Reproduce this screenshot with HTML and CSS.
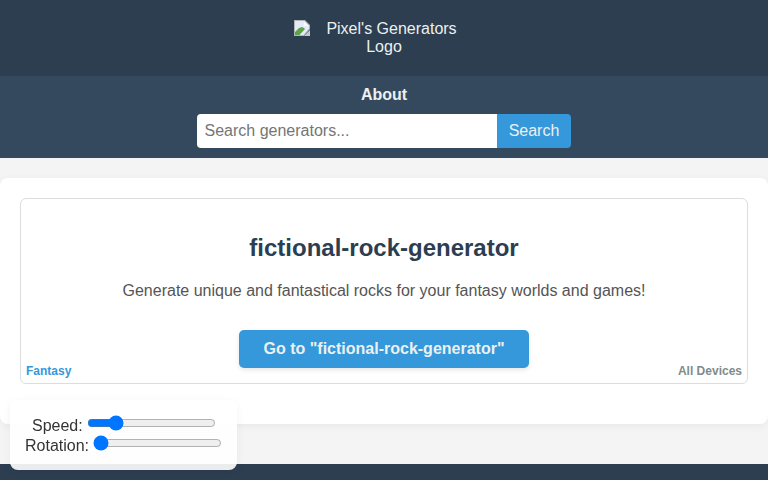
FILE: index.html
```html
<!DOCTYPE html>
<html lang="en">
<head>
<meta charset="utf-8">
<title>fictional-rock-generator</title>
<link rel="stylesheet" href="styles.css">
</head>
<body>
<header class="site-header">
  <div class="logo">
    <svg class="broken-icon" width="16" height="16" viewBox="0 0 16 16" aria-hidden="true">
      <path d="M0 0h11l5 5v4l-6 7H0z" fill="#aeb6ba"/>
      <path d="M1 1h9l5 5v2.500L9.500 15H1z" fill="#e3ecf8"/>
      <path d="M10 1l5 5h-5z" fill="#f7f9fb"/>
      <path d="M1 15v-3l4-4 3-1 2 1 1 1-5.500 6z" fill="#5da447"/>
      <path d="M11 15l5-5v6h-6z" fill="#c4ccd0"/>
    </svg><span class="logo-first">Pixel's Generators</span><br>Logo
  </div>
</header>
<nav class="site-nav">
  <a class="nav-link" href="#">About</a>
  <form class="search">
    <input class="search-input" type="text" placeholder="Search generators...">
    <button class="search-button" type="button">Search</button>
  </form>
</nav>
<main class="content">
  <section class="card">
    <h1 class="card-title">fictional-rock-generator</h1>
    <p class="card-text">Generate unique and fantastical rocks for your fantasy worlds and games!</p>
    <a class="card-button" href="#">Go to "fictional-rock-generator"</a>
    <div class="card-meta">
      <span class="tag">Fantasy</span>
      <span class="devices">All Devices</span>
    </div>
  </section>
</main>
<footer class="site-footer"></footer>
<div class="controls">
  <div class="control control-speed"><label for="speed">Speed:</label><input id="speed" type="range" min="0" max="100" value="19"></div>
  <div class="control"><label for="rotation">Rotation:</label><input id="rotation" type="range" min="0" max="100" value="0"></div>
</div>
</body>
</html>
```
FILE: styles.css
```css
* { box-sizing: border-box; }
html, body { height: 100%; }
body {
  margin: 0;
  height: 480px;
  overflow: hidden;
  background: #f4f4f4;
  color: #333;
  font-family: "Liberation Sans", Arial, sans-serif;
  font-size: 16px;
  line-height: 1.15;
}
.site-header {
  height: 76px;
  background: #2c3e50;
  display: flex;
  justify-content: center;
  padding-top: 20px;
}
.logo {
  width: 180px;
  height: 36px;
  color: #ecf0f1;
  text-align: center;
  line-height: 18px;
  white-space: nowrap;
}
.broken-icon { vertical-align: top; margin-right: 16px; }
.logo-first { margin-right: 17px; }
.site-nav {
  height: 82px;
  background: #34495e;
  display: flex;
  flex-direction: column;
  align-items: center;
  padding-top: 10px;
}
.nav-link {
  color: #ecf0f1;
  font-weight: 700;
  text-decoration: none;
  line-height: 18px;
}
.search { display: flex; margin-top: 10px; }
.search-input {
  width: 300px;
  height: 34px;
  border: 0;
  border-radius: 4px 0 0 4px;
  padding: 0 7.5px;
  font: 16px "Liberation Sans", Arial, sans-serif;
  background: #fff;
  color: #333;
}
.search-input::placeholder { color: #757575; }
.search-button {
  width: 74px;
  height: 34px;
  border: 0;
  border-radius: 0 4px 4px 0;
  background: #3498db;
  color: #ecf0f1;
  font: 16px "Liberation Sans", Arial, sans-serif;
  padding: 0;
}
.content {
  height: 246px;
  margin-top: 20px;
  padding: 20px;
  background: #fff;
  border-radius: 8px;
  box-shadow: 0 2px 10px rgba(0, 0, 0, 0.05);
}
.card {
  height: 186px;
  border: 1px solid #ddd;
  border-radius: 6px;
  background: #fff;
  display: flex;
  flex-direction: column;
  align-items: center;
  padding: 35px 5px 5px;
}
.card-title {
  margin: 0;
  color: #2c3e50;
  font-size: 24px;
  font-weight: 700;
  line-height: 28px;
}
.card-text {
  margin: 20px 0 0;
  color: #555;
  line-height: 18px;
}
.card-button {
  margin-top: 30px;
  width: 290px;
  height: 38px;
  display: flex;
  align-items: center;
  justify-content: center;
  background: #3498db;
  color: #ecf0f1;
  font-weight: 700;
  text-decoration: none;
  border-radius: 5px;
  box-shadow: 0 2px 5px rgba(0, 0, 0, 0.1);
}
.card-meta {
  align-self: stretch;
  display: flex;
  justify-content: space-between;
  font-size: 12px;
  font-weight: 700;
  line-height: 14px;
  margin-top: -4px;
}
.tag { color: #3498db; }
.devices { color: #7f8c8d; }
.site-footer {
  height: 16px;
  margin-top: 40px;
  background: #2c3e50;
}
.controls {
  position: fixed;
  left: 10px;
  top: 400px;
  width: 227px;
  height: 70px;
  padding: 13px 15px 15px;
  background: rgba(255, 255, 255, 0.9);
  border-radius: 8px;
  box-shadow: 0 2px 10px rgba(0, 0, 0, 0.05);
  white-space: nowrap;
  line-height: 20px;
}
.control { height: 20px; }
.control-speed { padding-left: 7px; }
.control input { margin: 2px 0 2px 4px; }
```
